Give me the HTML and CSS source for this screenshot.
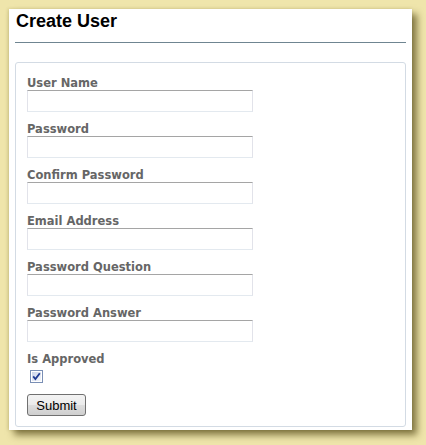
FILE: index.html
```html
<!DOCTYPE html>
<html>
<head>
<meta charset="utf-8">
<link rel="stylesheet" href="styles.css">
</head>
<body>
<div class="panel">
  <h1 class="title">Create User</h1>
  <div class="rule"></div>
  <form class="box">
    <div class="row"><label class="lbl">User Name</label><input class="field" type="text"></div>
    <div class="row"><label class="lbl">Password</label><input class="field" type="password"></div>
    <div class="row"><label class="lbl">Confirm Password</label><input class="field" type="password"></div>
    <div class="row"><label class="lbl">Email Address</label><input class="field" type="text"></div>
    <div class="row"><label class="lbl">Password Question</label><input class="field" type="text"></div>
    <div class="row"><label class="lbl">Password Answer</label><input class="field" type="text"></div>
    <div class="row last"><label class="lbl">Is Approved</label>
      <span class="check">
        <svg width="13" height="13" viewBox="0 0 13 13">
          <defs>
            <linearGradient id="cg" x1="0" y1="0" x2="1" y2="1">
              <stop offset="0" stop-color="#c9d3ea"/>
              <stop offset="1" stop-color="#f4f6fb"/>
            </linearGradient>
          </defs>
          <rect x="0.5" y="0.5" width="12" height="12" fill="#ffffff" stroke="#7a8fb5"/>
          <rect x="2" y="2" width="9" height="9" fill="url(#cg)"/>
          <path d="M3.2 6.4 L5.4 9 L9.8 3.2" fill="none" stroke="#1f3a93" stroke-width="1.8"/>
        </svg>
      </span>
    </div>
    <button class="btn" type="button">Submit</button>
  </form>
</div>
</body>
</html>
```

FILE: styles.css
```css
html, body {
  margin: 0;
  padding: 0;
}
body {
  background: #efe5ab;
  width: 426px;
  height: 445px;
  overflow: hidden;
}
.panel {
  box-sizing: border-box;
  margin: 9px 0 0 9px;
  width: 403px;
  height: 421px;
  padding: 0 6px;
  background: #ffffff;
  box-shadow: 5px 5px 7px rgba(70, 60, 10, 0.65), -1px 0 3px rgba(120, 110, 40, 0.25);
  display: flex;
  flex-direction: column;
}
.title {
  flex-shrink: 0;
  margin: 0;
  padding: 2px 1px 0;
  font-family: "Liberation Sans", Arial, sans-serif;
  font-weight: bold;
  font-size: 18px;
  line-height: 21px;
  color: #000;
}
.rule {
  flex-shrink: 0;
  margin-top: 10px;
  height: 1px;
  background: #6f8591;
}
.box {
  box-sizing: border-box;
  margin: 19px 0 3px;
  flex: 1;
  min-height: 0;
  border: 1px solid #d3dbe4;
  border-radius: 3px;
  padding: 13px 11px 10px;
  display: flex;
  flex-direction: column;
  align-items: flex-start;
}
.row {
  flex-shrink: 0;
  display: flex;
  flex-direction: column;
  align-items: flex-start;
  margin-bottom: 10px;
}
.lbl {
  font-family: "DejaVu Sans", Verdana, sans-serif;
  font-weight: bold;
  font-size: 11.5px;
  line-height: 14px;
  color: #666666;
}
.field {
  box-sizing: border-box;
  width: 226px;
  height: 22px;
  margin: 0;
  padding: 0 2px;
  border: 1px solid #e2e3ea;
  border-top-color: #a5a5a5;
  border-bottom-color: #e3e9ef;
  background: #fff;
  outline: none;
}
.row.last {
  margin-bottom: 0;
}
.check {
  display: block;
  width: 13px;
  height: 13px;
  margin: 4px 0 0 3px;
}
.check svg {
  display: block;
}
.btn {
  flex-shrink: 0;
  margin-top: 11px;
  box-sizing: border-box;
  width: 59px;
  height: 22px;
  padding: 0;
  border: 1px solid #707070;
  border-radius: 3px;
  background: linear-gradient(#f3f3f3 0%, #ebebeb 50%, #dddddd 51%, #cfcfcf 100%);
  font-family: "Liberation Sans", Arial, sans-serif;
  font-size: 13px;
  color: #000;
}
```
